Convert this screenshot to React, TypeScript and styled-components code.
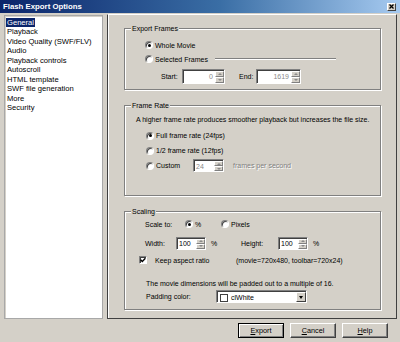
import React from 'react';
import styled, { createGlobalStyle } from 'styled-components';

const GlobalStyle = createGlobalStyle`
  html, body {
    margin: 0;
    padding: 0;
    background: #d4d0c8;
  }
  body {
    font-family: "Liberation Sans", Arial, sans-serif;
    font-size: 7px;
    color: #000;
  }
  * { box-sizing: border-box; }
`;

const Window = styled.div`
  width: 400px;
  height: 342px;
  display: flex;
  flex-direction: column;
  background: #d4d0c8;
  overflow: hidden;
`;

const TitleBar = styled.div`
  height: 13px;
  flex: none;
  display: flex;
  align-items: center;
  justify-content: space-between;
  padding: 0 4px 0 3px;
  background: linear-gradient(to right, #0a246a 0%, #3a6ea5 55%, #a6caf0 100%);
  color: #fff;
  font-weight: bold;
  font-size: 7.8px;
`;

const CloseBox = styled.div`
  width: 9px;
  height: 8px;
  background: #d4d0c8;
  border: 1px solid;
  border-color: #fff #404040 #404040 #fff;
  display: flex;
  align-items: center;
  justify-content: center;
`;

const Body = styled.div`
  display: flex;
  gap: 4px;
  padding: 1px 3px 0 4px;
`;

const List = styled.ul`
  list-style: none;
  margin: 1px 0 0;
  width: 99px;
  height: 304px;
  padding: 1.5px 0 0 1px;
  background: #fff;
  border: 1px solid #a8a8a8;
  box-shadow: inset 1px 1px 0 #d4d0c8;
  font-size: 7.6px;
`;

const ListItem = styled.li<{ $selected?: boolean }>`
  height: 9.5px;
  line-height: 9.5px;
  span {
    display: inline-block;
    padding: 0 1px;
    background: ${(p) => (p.$selected ? '#0a246a' : 'transparent')};
    color: ${(p) => (p.$selected ? '#fff' : '#000')};
  }
`;

const Panel = styled.div`
  width: 290px;
  height: 305px;
  display: flex;
  flex-direction: column;
  gap: 15px;
  padding: 13px 15px 0 16px;
  border: 1px solid #404040;
  border-top-color: #fff;
  box-shadow: inset 1px 0 0 #fff;
`;

const Group = styled.div<{ $h: number; $pt: number }>`
  position: relative;
  height: ${(p) => p.$h}px;
  padding-top: ${(p) => p.$pt}px;
  border: 1px solid #808080;
  box-shadow: inset 1px 1px 0 #fff, 1px 1px 0 #fff;
  display: flex;
  flex-direction: column;
`;

const GroupTitle = styled.span`
  position: absolute;
  top: -5px;
  left: 6px;
  padding: 0 1px;
  line-height: 9px;
  background: #d4d0c8;
`;

const Row = styled.div<{ $h: number; $mt?: number; $pl: number }>`
  display: flex;
  align-items: center;
  height: ${(p) => p.$h}px;
  margin-top: ${(p) => p.$mt ?? 0}px;
  padding-left: ${(p) => p.$pl}px;
  white-space: nowrap;
`;

const Cell = styled.span<{ $w?: number; $ml?: number; $dim?: boolean }>`
  display: inline-block;
  flex: none;
  width: ${(p) => (p.$w ? `${p.$w}px` : 'auto')};
  margin-left: ${(p) => p.$ml ?? 0}px;
  color: ${(p) => (p.$dim ? '#808080' : '#000')};
  text-shadow: ${(p) => (p.$dim ? '1px 1px 0 #fff' : 'none')};
`;

const RadioDot = styled.span<{ $on?: boolean }>`
  width: 8px;
  height: 8px;
  flex: none;
  margin-right: 2px;
  border-radius: 50%;
  border: 1px solid;
  border-color: #808080 #fff #fff #808080;
  background: #fff;
  box-shadow: inset 1px 1px 0 #404040;
  display: flex;
  align-items: center;
  justify-content: center;
  &::after {
    content: '';
    width: 3px;
    height: 3px;
    border-radius: 50%;
    background: ${(p) => (p.$on ? '#000' : 'transparent')};
  }
`;

const CheckBox = styled.span`
  width: 8px;
  height: 8px;
  flex: none;
  margin-right: 8px;
  border: 1px solid;
  border-color: #808080 #fff #fff #808080;
  background: #fff;
  box-shadow: inset 1px 1px 0 #404040;
  display: flex;
  align-items: center;
  justify-content: center;
`;

const Etch = styled.span<{ $mr: number }>`
  flex: 1;
  height: 2px;
  margin: 0 ${(p) => p.$mr}px 0 7px;
  border-top: 1px solid #808080;
  border-bottom: 1px solid #fff;
`;

const Field = styled.div<{ $w: number; $h: number }>`
  width: ${(p) => p.$w}px;
  height: ${(p) => p.$h}px;
  flex: none;
  display: flex;
  align-items: stretch;
  background: #fff;
  border: 1px solid;
  border-color: #808080 #fff #fff #808080;
  box-shadow: inset 1px 1px 0 #404040;
  padding: 1px 0 0 1px;
`;

const FieldText = styled.span<{ $right?: boolean; $dim?: boolean }>`
  flex: 1;
  display: flex;
  align-items: center;
  justify-content: ${(p) => (p.$right ? 'flex-end' : 'flex-start')};
  padding: 0 2px 0 1px;
  color: ${(p) => (p.$dim ? '#8a8a8a' : '#000')};
`;

const SpinCol = styled.div`
  width: 9px;
  display: flex;
  flex-direction: column;
`;

const SpinBtn = styled.div<{ $up?: boolean }>`
  flex: 1;
  background: #d4d0c8;
  border: 1px solid;
  border-color: #fff #808080 #808080 #fff;
  display: flex;
  align-items: center;
  justify-content: center;
  &::after {
    content: '';
    border-left: 2px solid transparent;
    border-right: 2px solid transparent;
    ${(p) => (p.$up ? 'border-bottom: 2px solid #8a8a8a;' : 'border-top: 2px solid #8a8a8a;')}
  }
`;

const Swatch = styled.span`
  width: 8px;
  height: 8px;
  margin: 1px 2px 0 2px;
  flex: none;
  background: #fff;
  border: 1px solid #404040;
  align-self: center;
`;

const DropBtn = styled.div`
  width: 10px;
  background: #d4d0c8;
  border: 1px solid;
  border-color: #fff #404040 #404040 #fff;
  display: flex;
  align-items: center;
  justify-content: center;
  &::after {
    content: '';
    border-left: 2.5px solid transparent;
    border-right: 2.5px solid transparent;
    border-top: 3px solid #000;
  }
`;

const Footer = styled.div`
  display: flex;
  justify-content: flex-end;
  gap: 6px;
  padding: 4px 12px 0 0;
`;

const Button = styled.button<{ $default?: boolean }>`
  width: 46px;
  height: 15px;
  padding: 0;
  font: inherit;
  font-size: 7.3px;
  color: #000;
  background: #d4d0c8;
  border: 1px solid;
  border-color: ${(p) => (p.$default ? '#000' : '#fff #404040 #404040 #fff')};
  box-shadow: ${(p) =>
    p.$default ? 'inset 1px 1px 0 #fff, inset -1px -1px 0 #808080' : 'inset -1px -1px 0 #808080'};
  u { text-decoration: underline; }
`;

const SpinField = ({
  w,
  h,
  value,
  right,
  dim,
}: {
  w: number;
  h: number;
  value: string;
  right?: boolean;
  dim?: boolean;
}) => (
  <Field $w={w} $h={h}>
    <FieldText $right={right} $dim={dim}>
      {value}
    </FieldText>
    <SpinCol>
      <SpinBtn $up />
      <SpinBtn />
    </SpinCol>
  </Field>
);

const Radio = ({ on, label, w }: { on?: boolean; label: string; w?: number }) => (
  <>
    <RadioDot $on={on} />
    <Cell $w={w}>{label}</Cell>
  </>
);

const pages = [
  'General',
  'Playback',
  'Video Quality (SWF/FLV)',
  'Audio',
  'Playback controls',
  'Autoscroll',
  'HTML template',
  'SWF file generation',
  'More',
  'Security',
];

const App: React.FC = () => {
  return (
    <Window>
      <GlobalStyle />
      <TitleBar>
        <span>Flash Export Options</span>
        <CloseBox>
          <svg width="5" height="5" viewBox="0 0 5 5">
            <path d="M0.5 0.5 L4.5 4.5 M4.5 0.5 L0.5 4.5" stroke="#000" strokeWidth="1.3" />
          </svg>
        </CloseBox>
      </TitleBar>

      <Body>
        <List>
          {pages.map((p, i) => (
            <ListItem key={p} $selected={i === 0}>
              <span>{p}</span>
            </ListItem>
          ))}
        </List>

        <Panel>
          <Group $h={62} $pt={9}>
            <GroupTitle>Export Frames</GroupTitle>
            <Row $h={14} $pl={20}>
              <Radio on label="Whole Movie" />
            </Row>
            <Row $h={14} $pl={20}>
              <Radio label="Selected Frames" />
              <Etch $mr={44} />
            </Row>
            <Row $h={16} $mt={2} $pl={36}>
              <Cell $w={21}>Start:</Cell>
              <SpinField w={43} h={15} value="0" right dim />
              <Cell $w={17} $ml={14}>End:</Cell>
              <SpinField w={45} h={15} value="1619" right dim />
            </Row>
          </Group>

          <Group $h={91} $pt={7}>
            <GroupTitle>Frame Rate</GroupTitle>
            <Row $h={12} $pl={11}>
              A higher frame rate produces smoother playback but increases the file size.
            </Row>
            <Row $h={15} $mt={3} $pl={21}>
              <Radio on label="Full frame rate (24fps)" />
            </Row>
            <Row $h={15} $pl={21}>
              <Radio label="1/2 frame rate (12fps)" />
            </Row>
            <Row $h={15} $pl={21}>
              <Radio label="Custom" w={37} />
              <SpinField w={31} h={13} value="24" dim />
              <Cell $ml={9} $dim>
                frames per second
              </Cell>
            </Row>
          </Group>

          <Group $h={99} $pt={5}>
            <GroupTitle>Scaling</GroupTitle>
            <Row $h={14} $pl={20}>
              <Cell $w={40}>Scale to:</Cell>
              <Radio on label="%" w={26} />
              <Radio label="Pixels" />
            </Row>
            <Row $h={14} $mt={5} $pl={20}>
              <Cell $w={31}>Width:</Cell>
              <SpinField w={30} h={13} value="100" />
              <Cell $w={30} $ml={5}>%</Cell>
              <Cell $w={37}>Height:</Cell>
              <SpinField w={30} h={13} value="100" />
              <Cell $ml={5}>%</Cell>
            </Row>
            <Row $h={14} $mt={3} $pl={14}>
              <CheckBox>
                <svg width="6" height="6" viewBox="0 0 6 6">
                  <path d="M0.6 2.8 L2.3 4.5 L5.4 1.2" stroke="#000" strokeWidth="1.4" fill="none" />
                </svg>
              </CheckBox>
              <Cell $w={81}>Keep aspect ratio</Cell>
              <Cell>(movie=720x480, toolbar=720x24)</Cell>
            </Row>
            <Row $h={14} $mt={9} $pl={21}>
              The movie dimensions will be padded out to a multiple of 16.
            </Row>
            <Row $h={13} $pl={21}>
              <Cell $w={70}>Padding color:</Cell>
              <Field $w={91} $h={13}>
                <Swatch />
                <FieldText>clWhite</FieldText>
                <DropBtn />
              </Field>
            </Row>
          </Group>
        </Panel>
      </Body>

      <Footer>
        <Button $default>
          <u>E</u>xport
        </Button>
        <Button>
          <u>C</u>ancel
        </Button>
        <Button>
          <u>H</u>elp
        </Button>
      </Footer>
    </Window>
  );
};

export default App;
